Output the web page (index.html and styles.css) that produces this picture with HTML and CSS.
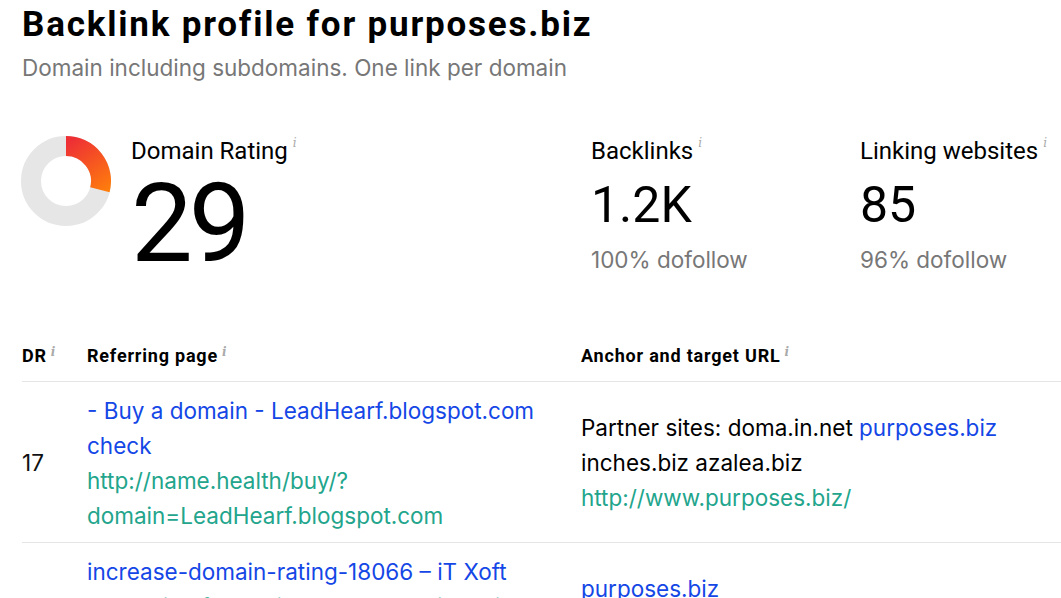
FILE: index.html
```html
<!DOCTYPE html>
<html>
<head>
<meta charset="utf-8">
<link rel="stylesheet" href="styles.css">
</head>
<body>
<div class="page">
  <h1 class="title">Backlink profile for purposes.biz</h1>
  <p class="subtitle">Domain including subdomains. One link per domain</p>

  <div class="stats">
    <div class="stat stat-dr">
      <svg class="donut" width="90" height="90" viewBox="0 0 90 90">
        <defs>
          <linearGradient id="g" gradientUnits="userSpaceOnUse" x1="50" y1="5" x2="86" y2="56">
            <stop offset="0" stop-color="#ee3035"/>
            <stop offset="1" stop-color="#ff7e0b"/>
          </linearGradient>
        </defs>
        <circle cx="45" cy="45" r="35" fill="none" stroke="#e6e6e6" stroke-width="20"/>
        <path d="M45 10 A35 35 0 0 1 78.9 53.7" fill="none" stroke="url(#g)" stroke-width="20"/>
      </svg>
      <div class="stat-body">
        <div class="stat-label">Domain Rating<span class="info">i</span></div>
        <div class="stat-big">29</div>
      </div>
    </div>
    <div class="stat">
      <div class="stat-body">
        <div class="stat-label">Backlinks<span class="info">i</span></div>
        <div class="stat-num">1.2K</div>
        <div class="stat-sub">100% dofollow</div>
      </div>
    </div>
    <div class="stat">
      <div class="stat-body">
        <div class="stat-label">Linking websites<span class="info">i</span></div>
        <div class="stat-num">85</div>
        <div class="stat-sub">96% dofollow</div>
      </div>
    </div>
  </div>

  <div class="table">
    <div class="row head">
      <div class="cell">DR<span class="info">i</span></div>
      <div class="cell">Referring page<span class="info">i</span></div>
      <div class="cell">Anchor and target URL<span class="info">i</span></div>
    </div>
    <div class="row">
      <div class="cell dr">17</div>
      <div class="cell">
        <a class="link">- Buy a domain - LeadHearf.blogspot.com check</a><br>
        <span class="url">http://name.health/buy/?<br>domain=LeadHearf.blogspot.com</span>
      </div>
      <div class="cell">
        Partner sites: doma.in.net <a class="link">purposes.biz</a><br>
        inches.biz azalea.biz<br>
        <span class="url">http://www.purposes.biz/</span>
      </div>
    </div>
    <div class="row">
      <div class="cell dr">76</div>
      <div class="cell">
        <a class="link">increase-domain-rating-18066 – iT Xoft</a><br>
        <span class="url">https://itxoft.com/increase-domain-rating-18066/</span>
      </div>
      <div class="cell">
        <a class="link">purposes.biz</a><br>
        <span class="url">http://purposes.biz/</span>
      </div>
    </div>
  </div>
</div>
</body>
</html>
```

FILE: styles.css
```css
html, body {
  margin: 0;
  padding: 0;
  background: #fff;
  overflow: hidden;
}
body {
  font-family: Inter, "Noto Sans", sans-serif;
  color: #000;
}
.page {
  padding-left: 22px;
}
.title {
  font-family: Roboto, "Liberation Sans", sans-serif;
  font-weight: 700;
  font-size: 35px;
  line-height: 40px;
  margin: 5px 0 0;
  letter-spacing: 1.8px;
}
.subtitle {
  margin: 9px 0 0;
  font-size: 22.5px;
  line-height: 28px;
  color: #777;
}
.stats {
  display: grid;
  grid-template-columns: 569px 269px 1fr;
  margin-top: 54px;
}
.stat-dr {
  display: flex;
  align-items: flex-start;
}
.donut {
  display: block;
  margin-right: 20px;
  margin-left: -1px;
}
.stat-label {
  font-family: Roboto, "Liberation Sans", sans-serif;
  font-size: 24px;
  line-height: 30px;
  color: #000;
}
.info {
  font-family: "DejaVu Serif", serif;
  font-style: italic;
  font-size: 12px;
  line-height: 12px;
  color: #aaa;
  vertical-align: top;
  position: relative;
  top: 1px;
  margin-left: 5px;
}
.stat-big {
  font-family: Roboto, "Liberation Sans", sans-serif;
  font-size: 110px;
  line-height: 90px;
  letter-spacing: -4px;
  margin-top: 13px;
}
.stat-num {
  font-family: Roboto, "Liberation Sans", sans-serif;
  font-size: 50px;
  line-height: 60px;
  margin-top: 9px;
}
.stat-sub {
  font-size: 22.5px;
  line-height: 28px;
  color: #777;
  margin-top: 11px;
}
.table {
  margin-top: 56px;
}
.row {
  display: grid;
  grid-template-columns: 65px 494px 1fr;
  align-items: center;
  border-bottom: 1px solid #e5e5e5;
  padding: 10.5px 0 9.5px;
  font-size: 22.5px;
  line-height: 35px;
}
.row.head {
  font-family: Roboto, "Liberation Sans", sans-serif;
  font-weight: 700;
  font-size: 18px;
  line-height: 24px;
  letter-spacing: 0.8px;
  padding: 14px 0 13px;
}
.row.head .info {
  top: 2px;
  margin-left: 4px;
  letter-spacing: 0;
}
.dr {
  color: #111;
}
.link {
  color: #1447e6;
  text-decoration: none;
}
.url {
  color: #22a58c;
}
```
